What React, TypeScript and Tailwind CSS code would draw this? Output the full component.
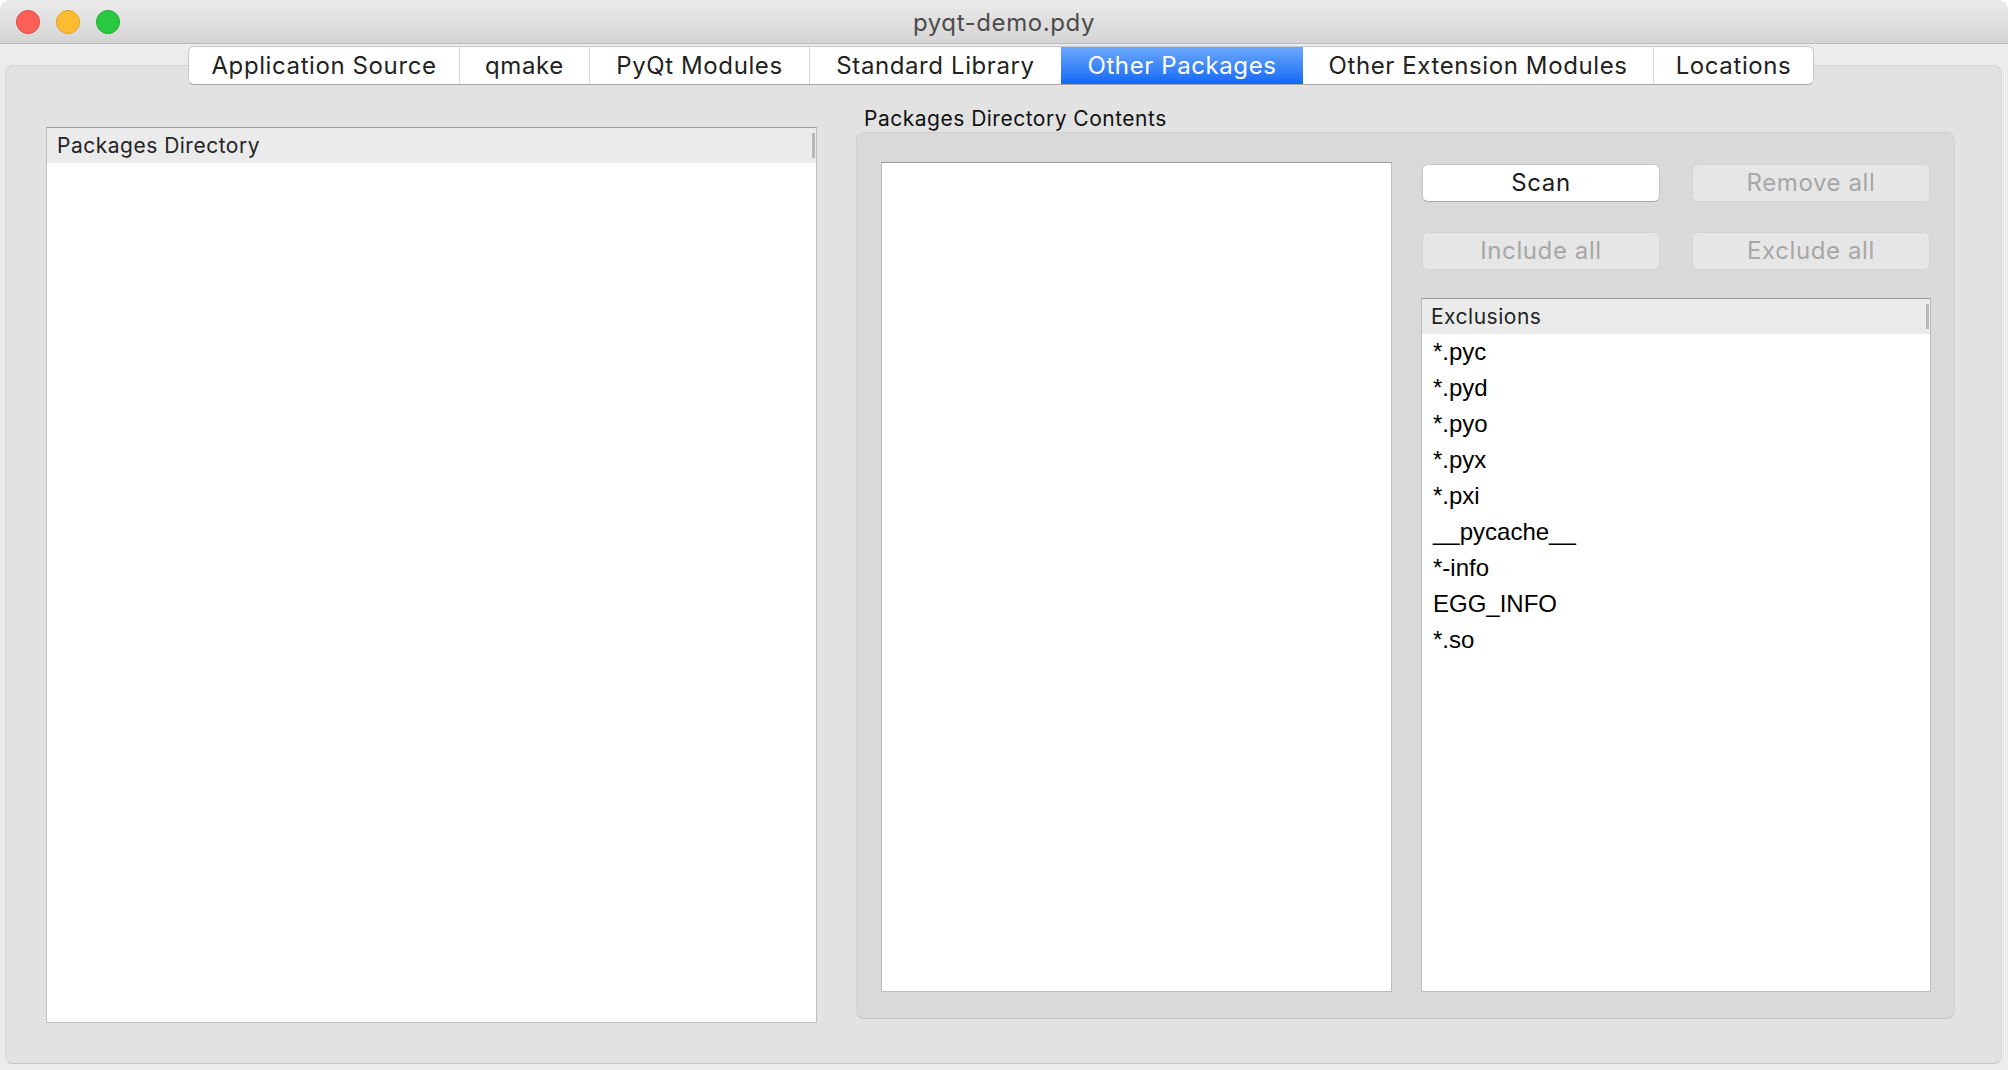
import React from "react";

type Tab = { label: string; width: string; active?: boolean };

const tabs: Tab[] = [
  { label: "Application Source", width: "w-[270px]" },
  { label: "qmake", width: "w-[130px]" },
  { label: "PyQt Modules", width: "w-[220px]" },
  { label: "Standard Library", width: "w-[252px]" },
  { label: "Other Packages", width: "w-[242px]", active: true },
  { label: "Other Extension Modules", width: "w-[350px]" },
  { label: "Locations", width: "w-[160px]" },
];

const exclusions = [
  "*.pyc",
  "*.pyd",
  "*.pyo",
  "*.pyx",
  "*.pxi",
  "__pycache__",
  "*-info",
  "EGG_INFO",
  "*.so",
];

const sf = "font-[Inter,sans-serif]";
const helv = "font-['Liberation_Sans',Arial,sans-serif]";

function TrafficLights() {
  return (
    <div className="flex items-center gap-[16px] pl-[16px]">
      <span className="block h-[24px] w-[24px] rounded-full border border-[#e2463f] bg-[#fe5f57]" />
      <span className="block h-[24px] w-[24px] rounded-full border border-[#dfa023] bg-[#febc2e]" />
      <span className="block h-[24px] w-[24px] rounded-full border border-[#1dad2b] bg-[#28c840]" />
    </div>
  );
}

function TabBar() {
  return (
    <div className="relative z-10 -mb-[20px] flex pl-[188px]">
      <div className="flex h-[39px] overflow-hidden rounded-[6px] border border-[#c8c8c8] border-b-[#a8a8a8] bg-white">
        {tabs.map((tab, i) => (
          <div
            key={tab.label}
            className={[
              tab.width,
              "flex items-center justify-center text-[24px] tracking-[0.6px]",
              sf,
              tab.active
                ? "bg-linear-to-b from-[#6ba7fc] to-[#0c68f5] text-white"
                : "text-[#222]",
              i > 0 && !tab.active && !tabs[i - 1].active
                ? "border-l border-[#d8d8d8]"
                : "",
            ].join(" ")}
          >
            {tab.label}
          </div>
        ))}
      </div>
    </div>
  );
}

function HeaderDivider() {
  return <span className="ml-auto mr-[1px] block h-[25px] w-[3px] bg-[#b9b9b9]" />;
}

function PushButton({ label, enabled }: { label: string; enabled?: boolean }) {
  return (
    <div
      className={[
        "flex h-[38px] items-center justify-center rounded-[6px] text-[24px] tracking-[0.6px]",
        sf,
        enabled
          ? "border border-[#c6c6c6] border-b-[#a9a9a9] bg-white text-[#1d1d1d]"
          : "border border-[#d4d4d4] bg-[#e6e6e6] text-[#a7a7a7]",
      ].join(" ")}
    >
      {label}
    </div>
  );
}

export default function App() {
  return (
    <div className="flex h-[1070px] w-[2008px] flex-col overflow-hidden rounded-t-[10px] bg-[#ececec]">
      {/* title bar */}
      <div className="grid h-[44px] shrink-0 grid-cols-[1fr_auto_1fr] items-center border-b border-[#bababa] bg-linear-to-b from-[#ebebeb] to-[#d4d4d4]">
        <TrafficLights />
        <div className={`${sf} pt-[2px] text-[24px] tracking-[0.6px] text-[#4b4b4b]`}>pyqt-demo.pdy</div>
        <div />
      </div>

      <div className="flex flex-1 flex-col pt-[2px]">
        <TabBar />

        {/* tab pane frame */}
        <div className="ml-[5px] mr-[6px] flex h-[999px] rounded-[8px] border border-[#d6d6d6] border-b-[#c6c6c6] bg-[#e2e2e2] pl-[40px] pr-[46px]">
          {/* packages directory tree */}
          <div className="mb-[40px] mt-[61px] flex w-[771px] flex-col border border-[#bdbdbd] border-t-[#9a9a9a] bg-white">
            <div className={`flex h-[35px] items-center bg-[#ebebeb] pl-[10px] ${sf} text-[21px] tracking-[0.5px] text-[#242424]`}>
              Packages Directory
              <HeaderDivider />
            </div>
            <div className="flex-1" />
          </div>

          {/* contents group */}
          <div className="mb-[44px] ml-[39px] mt-[40px] flex flex-1 flex-col">
            <div className={`flex h-[25px] items-center pl-[8px] ${sf} text-[21px] tracking-[0.5px] text-[#111]`}>
              Packages Directory Contents
            </div>
            <div className="mt-[1px] flex flex-1 rounded-[8px] border border-[#d2d2d2] border-b-[#c4c4c4] bg-[#d9d9d9] pb-[26px] pl-[24px] pr-[23px] pt-[29px]">
              <div className="w-[511px] border border-[#bcbcbc] border-t-[#9a9a9a] bg-white" />

              <div className="ml-[29px] flex flex-1 flex-col">
                <div className="mt-[2px] grid grid-cols-2 gap-x-[32px] gap-y-[30px] px-[1px]">
                  <PushButton label="Scan" enabled />
                  <PushButton label="Remove all" />
                  <PushButton label="Include all" />
                  <PushButton label="Exclude all" />
                </div>

                <div className="mt-[28px] flex flex-1 flex-col border border-[#bcbcbc] border-t-[#9a9a9a] bg-white">
                  <div className={`flex h-[35px] items-center bg-[#ebebeb] pl-[9px] ${sf} text-[21px] tracking-[0.5px] text-[#242424]`}>
                    Exclusions
                    <HeaderDivider />
                  </div>
                  <div className="flex flex-col">
                    {exclusions.map((item) => (
                      <div
                        key={item}
                        className={`flex h-[36px] items-center pl-[11px] ${helv} text-[24px] text-black`}
                      >
                        {item}
                      </div>
                    ))}
                  </div>
                </div>
              </div>
            </div>
          </div>
        </div>
      </div>
    </div>
  );
}
